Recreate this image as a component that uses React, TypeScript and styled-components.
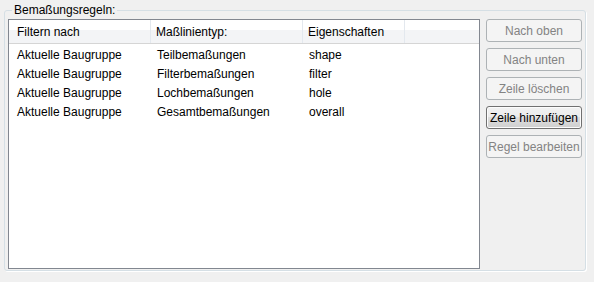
import React from "react";
import styled, { createGlobalStyle, css } from "styled-components";

const GlobalStyle = createGlobalStyle`
  html, body {
    margin: 0;
    padding: 0;
    background: #f0f0f0;
  }
  body {
    font-family: "Liberation Sans", Arial, sans-serif;
    font-size: 12px;
    color: #000;
  }
`;

const Page = styled.div`
  width: 594px;
  height: 282px;
  box-sizing: border-box;
  padding: 2px 0 0 4px;
  background: #f0f0f0;
  overflow: hidden;
`;

const Group = styled.fieldset`
  margin: 0;
  width: 582px;
  box-sizing: border-box;
  padding: 1px 3px 1px 3px;
  border: 1px solid #d5dfe5;
  border-radius: 3px;
  box-shadow: 1px 1px 0 #ffffff;
  display: flex;
  gap: 6px;
  min-inline-size: 0;
`;

const Legend = styled.legend`
  margin-left: 4px;
  padding: 0 2px;
  line-height: 16px;
  font-size: 12px;
  color: #000;
`;

const Table = styled.div`
  width: 472px;
  height: 250px;
  box-sizing: border-box;
  border: 1px solid #828790;
  background: #ffffff;
  display: flex;
  flex-direction: column;
`;

const columns = "142px 152px 102px 1fr";

const HeaderRow = styled.div`
  display: grid;
  grid-template-columns: ${columns};
  height: 24px;
  box-sizing: border-box;
  border-bottom: 1px solid #d5d5d5;
  background: linear-gradient(#ffffff 0%, #ffffff 45%, #f3f4f6 45%, #f3f4f6 100%);
`;

const HeaderCell = styled.div<{ $first?: boolean }>`
  height: 23px;
  box-sizing: border-box;
  padding-top: 1px;
  line-height: 23px;
  padding-left: ${(p) => (p.$first ? "8px" : "5px")};
  border-right: 1px solid #e3e8ee;
  white-space: nowrap;
`;

const Row = styled.div`
  display: grid;
  grid-template-columns: ${columns};
  height: 19px;
`;

const Cell = styled.div<{ $first?: boolean }>`
  height: 19px;
  box-sizing: border-box;
  padding-top: 2px;
  line-height: 19px;
  padding-left: ${(p) => (p.$first ? "8px" : "6px")};
  white-space: nowrap;
`;

const ButtonColumn = styled.div`
  display: flex;
  flex-direction: column;
  gap: 6px;
  width: 96px;
`;

const Button = styled.button<{ $enabled?: boolean }>`
  width: 96px;
  height: 23px;
  box-sizing: border-box;
  margin: 0;
  padding: 0;
  font-family: "Liberation Sans", Arial, sans-serif;
  font-size: 12px;
  line-height: 16px;
  border-radius: 3px;
  text-align: center;
  ${(p) =>
    p.$enabled
      ? css`
          border: 1px solid #707070;
          color: #000;
          background: linear-gradient(
            #f2f2f2 0%,
            #ebebeb 50%,
            #dddddd 50%,
            #cfcfcf 100%
          );
          box-shadow: inset 0 0 0 1px #fcfcfc;
        `
      : css`
          border: 1px solid #adb2b5;
          color: #838383;
          background: #f4f4f4;
        `}
`;

const rows = [
  ["Aktuelle Baugruppe", "Teilbemaßungen", "shape"],
  ["Aktuelle Baugruppe", "Filterbemaßungen", "filter"],
  ["Aktuelle Baugruppe", "Lochbemaßungen", "hole"],
  ["Aktuelle Baugruppe", "Gesamtbemaßungen", "overall"],
];

const buttons: { label: string; enabled?: boolean }[] = [
  { label: "Nach oben" },
  { label: "Nach unten" },
  { label: "Zeile löschen" },
  { label: "Zeile hinzufügen", enabled: true },
  { label: "Regel bearbeiten" },
];

export default function App() {
  return (
    <>
      <GlobalStyle />
      <Page>
        <Group>
          <Legend>Bemaßungsregeln:</Legend>
          <Table>
            <HeaderRow>
              <HeaderCell $first>Filtern nach</HeaderCell>
              <HeaderCell>Maßlinientyp:</HeaderCell>
              <HeaderCell>Eigenschaften</HeaderCell>
              <div />
            </HeaderRow>
            {rows.map((r, i) => (
              <Row key={i}>
                <Cell $first>{r[0]}</Cell>
                <Cell>{r[1]}</Cell>
                <Cell>{r[2]}</Cell>
                <div />
              </Row>
            ))}
          </Table>
          <ButtonColumn>
            {buttons.map((b) => (
              <Button key={b.label} $enabled={b.enabled} disabled={!b.enabled}>
                {b.label}
              </Button>
            ))}
          </ButtonColumn>
        </Group>
      </Page>
    </>
  );
}
